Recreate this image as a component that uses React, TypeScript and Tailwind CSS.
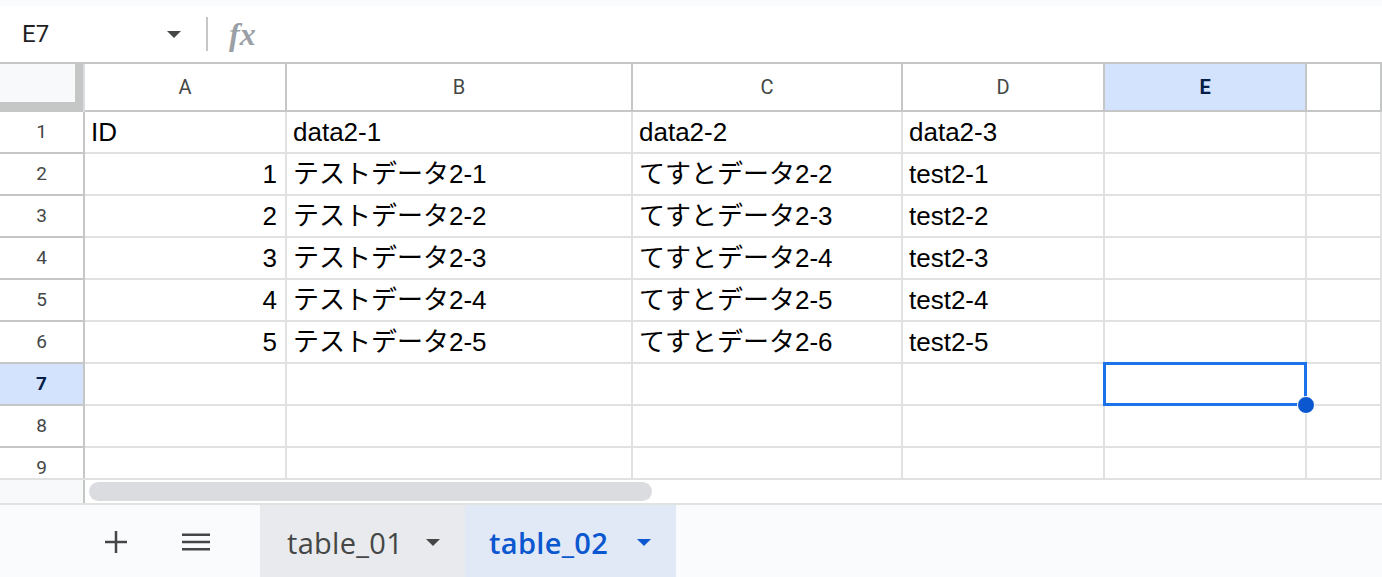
import React from "react";

const columns = ["A", "B", "C", "D", "E", ""];

const rows: string[][] = [
  ["ID", "data2-1", "data2-2", "data2-3", "", ""],
  ["1", "テストデータ2-1", "てすとデータ2-2", "test2-1", "", ""],
  ["2", "テストデータ2-2", "てすとデータ2-3", "test2-2", "", ""],
  ["3", "テストデータ2-3", "てすとデータ2-4", "test2-3", "", ""],
  ["4", "テストデータ2-4", "てすとデータ2-5", "test2-4", "", ""],
  ["5", "テストデータ2-5", "てすとデータ2-6", "test2-5", "", ""],
  ["", "", "", "", "", ""],
  ["", "", "", "", "", ""],
  ["", "", "", "", "", ""],
];

function Caret({ className }: { className?: string }) {
  return (
    <svg className={className} width="14" height="7" viewBox="0 0 14 7">
      <path d="M0 0 L14 0 L7 7 Z" fill="currentColor" />
    </svg>
  );
}

function FormulaBar() {
  return (
    <div className="flex h-[58px] items-center border-b-2 border-[#c4c7c5] bg-white font-['Roboto',sans-serif]">
      <div className="flex w-[206px] items-center pl-[22px] pr-[25px]">
        <span className="text-[24px] leading-none text-[#1f1f1f]">E7</span>
        <Caret className="ml-auto text-[#444746]" />
      </div>
      <div className="h-[34px] w-[2px] bg-[#c4c7c5]" />
      <span className="ml-[21px] font-['Liberation_Serif',serif] text-[32px] font-bold italic leading-none text-[#9aa0a6]">
        fx
      </span>
    </div>
  );
}

function Grid() {
  return (
    <div className="relative h-[414px] overflow-hidden">
      <div className="grid grid-cols-[85px_202px_346px_270px_202px_202px_1fr] font-['Liberation_Sans','Noto_Sans_CJK_JP',sans-serif]">
        {/* header row */}
        <div className="h-[48px] border-r-2 border-[#dadce0]">
          <div className="h-full border-b-[10px] border-r-[8px] border-[#c4c7c5] bg-[#f8f9fa]" />
        </div>
        {columns.map((c) => {
          const active = c === "E";
          return (
            <div
              key={c || "F"}
              className={
                active
                  ? "flex h-[48px] items-center justify-center border-b-2 border-r-2 border-[#c4c7c5] bg-[#d3e3fd] font-['Roboto',sans-serif] text-[20px] font-bold text-[#041e49]"
                  : "flex h-[48px] items-center justify-center border-b-2 border-r-2 border-[#c4c7c5] bg-white font-['Roboto',sans-serif] text-[20px] text-[#444746]"
              }
            >
              {c}
            </div>
          );
        })}

        {rows.map((row, i) => {
          const n = i + 1;
          const active = n === 7;
          return (
            <React.Fragment key={n}>
              <div
                className={
                  active
                    ? "flex h-[42px] items-center justify-center border-b-2 border-r-2 border-[#c4c7c5] bg-[#d3e3fd] font-['Roboto',sans-serif] text-[19px] font-bold text-[#041e49]"
                    : "flex h-[42px] items-center justify-center border-b-2 border-r-2 border-[#c4c7c5] bg-white font-['Roboto',sans-serif] text-[19px] text-[#444746]"
                }
              >
                {n}
              </div>
              {row.map((cell, j) => {
                const numeric = j === 0 && /^\d+$/.test(cell);
                return (
                  <div
                    key={j}
                    className={
                      numeric
                        ? "flex h-[42px] items-center justify-end border-b-2 border-r-2 border-[#e1e1e1] pr-[8px] text-[26px] leading-none text-black"
                        : "flex h-[42px] items-center border-b-2 border-r-2 border-[#e1e1e1] pl-[6px] text-[26px] leading-none whitespace-nowrap text-black"
                    }
                  >
                    {cell}
                  </div>
                );
              })}
            </React.Fragment>
          );
        })}
      </div>

      {/* active cell E7 */}
      <div className="absolute left-[1103px] top-[298px] h-[44px] w-[204px] border-[3px] border-[#1a73e8]" />
      <div className="absolute left-[1297px] top-[332px] h-[18px] w-[18px] rounded-full border-[1.5px] border-white bg-[#0b57d0]" />
    </div>
  );
}

function ScrollRow() {
  return (
    <div className="flex h-[25px] border-t-2 border-[#e1e1e1]">
      <div className="w-[85px] border-r-2 border-[#c4c7c5] bg-[#f8f9fa]" />
      <div className="flex-1 bg-white pl-[4px] pt-[2px]">
        <div className="h-[19px] w-[563px] rounded-full bg-[#dadce0]" />
      </div>
    </div>
  );
}

function TabBar() {
  return (
    <div className="flex h-[74px] border-t-2 border-[#e1e3e1] bg-[#f9fbfd] font-['Open_Sans',sans-serif]">
      <div className="flex w-[260px] items-center pl-[104px] pt-[2px]">
        <svg width="24" height="24" viewBox="0 0 24 24" className="text-[#444746]">
          <rect x="1" y="10.75" width="22" height="2.5" fill="currentColor" />
          <rect x="10.75" y="1" width="2.5" height="22" fill="currentColor" />
        </svg>
        <svg width="28" height="20" viewBox="0 0 28 20" className="ml-[54px] text-[#444746]">
          <rect x="0" y="1.5" width="28" height="2.5" fill="currentColor" />
          <rect x="0" y="8.75" width="28" height="2.5" fill="currentColor" />
          <rect x="0" y="16" width="28" height="2.5" fill="currentColor" />
        </svg>
      </div>
      <div className="flex w-[205px] items-center bg-[#e8eaed] pl-[27px] pt-[3px]">
        <span className="text-[29px] leading-none tracking-[0.3px] text-[#444746]">table_01</span>
        <Caret className="ml-auto mr-[25px] text-[#444746]" />
      </div>
      <div className="flex w-[211px] items-center bg-[#e1e9f7] pl-[24px] pt-[3px]">
        <span className="text-[29px] font-semibold leading-none tracking-[0.3px] text-[#0b57d0]">table_02</span>
        <Caret className="ml-auto mr-[25px] text-[#0b57d0]" />
      </div>
    </div>
  );
}

export default function App() {
  return (
    <div className="flex h-[577px] w-[1382px] flex-col overflow-hidden bg-white">
      <div className="h-[6px] bg-[#f9fbfd]" />
      <FormulaBar />
      <Grid />
      <ScrollRow />
      <TabBar />
    </div>
  );
}
